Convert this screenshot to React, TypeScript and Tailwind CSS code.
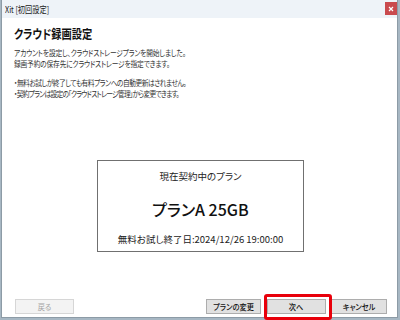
const jp = "font-['Noto_Sans_CJK_JP','Noto_Sans',sans-serif] [font-feature-settings:'palt']";

function DialogButton({ label, disabled, className }: { label: string; disabled?: boolean; className: string }) {
  return (
    <button
      type="button"
      disabled={disabled}
      className={`${className} flex h-[15px] items-center justify-center border text-[8px] leading-none ${
        disabled
          ? 'border-[#d6d6d6] bg-[#f3f3f3] text-[#a4a4a4]'
          : 'border-[#adadad] bg-[#e1e1e1] font-medium text-[#111]'
      }`}
    >
      <span className="scale-x-[0.9]">{label}</span>
    </button>
  );
}

export default function App() {
  return (
    <div className={`relative h-[320px] w-[400px] overflow-hidden bg-[#a7b7c3] ${jp}`}>
      <div className="ml-px flex h-[318px] w-[397px] flex-col border-x border-b border-[#8d9ba6] bg-white">
        {/* title bar */}
        <div className="flex h-[18px] items-center justify-between bg-[#eef3f8] pl-[3px]">
          <span className="origin-left scale-x-[0.8] text-[9px] leading-none text-[#202020]">Xit [初回設定]</span>
          <div className="mt-[2px] flex h-[13px] w-[12px] items-center justify-center self-start bg-[#c94a4e]">
            <svg width="6" height="6" viewBox="0 0 6 6">
              <path d="M1 1 L5 5 M5 1 L1 5" stroke="#fff" strokeWidth="1.2" />
            </svg>
          </div>
        </div>

        <div className="flex flex-1 flex-col">
          <div className="px-[12px]">
            <h1 className="mt-[8px] origin-left scale-x-[0.82] text-[12.5px] font-bold leading-[15px] text-[#111]">
              クラウド録画設定
            </h1>
            <div className="mt-[6px] origin-left scale-x-[0.79] text-[8.5px] leading-[11px] tracking-[-0.2px] text-[#333]">
              <p>アカウントを設定し、クラウドストレージプランを開始しました。</p>
              <p>録画予約の保存先にクラウドストレージを指定できます。</p>
              <p className="mt-[8px] tracking-[-0.6px]">・無料お試しが終了しても有料プランへの自動更新はされません。</p>
              <p className="tracking-[-0.9px]">・契約プランは設定の「クラウドストレージ管理」から変更できます。</p>
            </div>
          </div>

          <div className="ml-[95px] mt-[61px] flex h-[92px] w-[207px] flex-col items-center border border-[#707070] text-[#222]">
            <p className="mt-[8px] text-[9.5px] leading-[14px]">現在契約中のプラン</p>
            <p className="mt-[16px] text-[16px] font-medium leading-[20px] text-[#111]">プランA 25GB</p>
            <p className="mt-[13px] text-[9.5px] leading-[14px]">無料お試し終了日:2024/12/26 19:00:00</p>
          </div>

          <div className="mt-auto mb-[3px] flex items-center pl-[13px] pr-[10px]">
            <DialogButton label="戻る" disabled className="w-[59px]" />
            <DialogButton label="プランの変更" className="ml-auto w-[55px]" />
            <DialogButton label="次へ" className="ml-[6px] w-[59px]" />
            <DialogButton label="キャンセル" className="ml-[5px] w-[56px]" />
          </div>
        </div>
      </div>

      {/* highlight frame */}
      <div className="absolute left-[264px] top-[294px] h-[26px] w-[68px] rounded-[3px] border-[3px] border-[#e8000b]" />
    </div>
  );
}
